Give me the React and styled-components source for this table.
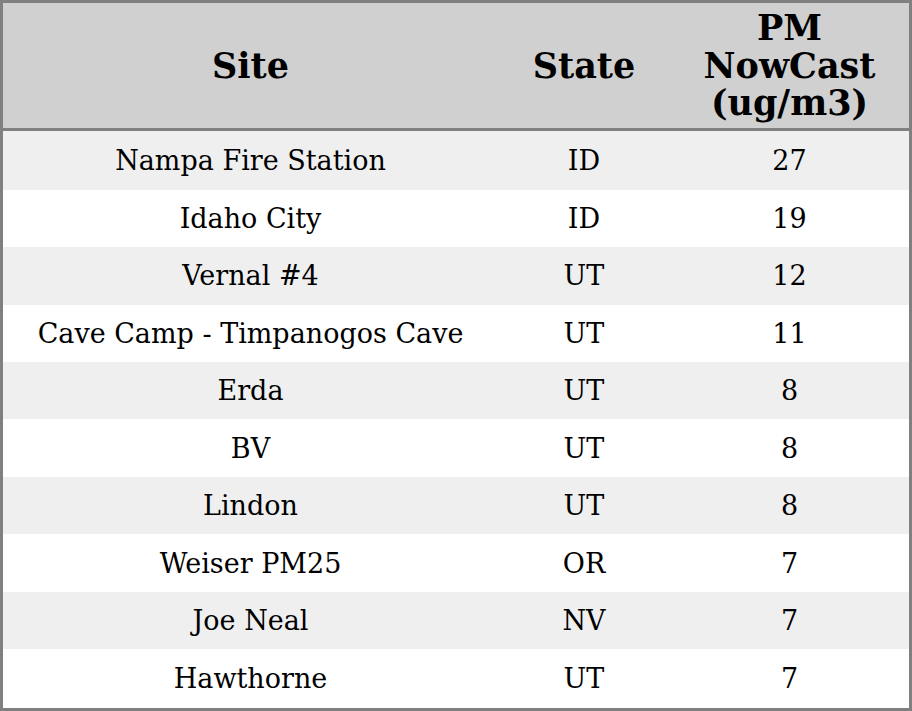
import styled, {createGlobalStyle} from 'styled-components';

const GlobalStyle = createGlobalStyle`
  html, body {
    margin: 0;
    padding: 0;
    background: #ffffff;
  }
  body {
    font-family: 'DejaVu Serif', serif;
  }
`;

const Table = styled.table`
  width: 912px;
  height: 711px;
  border-collapse: collapse;
  table-layout: fixed;
  border: 3px solid #808080;
  font-family: 'DejaVu Serif', serif;
  color: #000;
`;

const HeadRow = styled.tr`
  height: 128px;
  background: #d0d0d0;
  border-bottom: 3px solid #808080;
`;

const HeadCell = styled.th`
  font-size: 35px;
  font-weight: bold;
  line-height: 37.5px;
  text-align: center;
  padding: 0;
  width: ${(p) => p.w}px;
`;

const Row = styled.tr`
  background: ${(p) => (p.odd ? '#efefef' : '#ffffff')};
`;

const Cell = styled.td`
  font-size: 27px;
  text-align: center;
  padding: 0;
`;

const rows = [
  ['Nampa Fire Station', 'ID', 27],
  ['Idaho City', 'ID', 19],
  ['Vernal #4', 'UT', 12],
  ['Cave Camp - Timpanogos Cave', 'UT', 11],
  ['Erda', 'UT', 8],
  ['BV', 'UT', 8],
  ['Lindon', 'UT', 8],
  ['Weiser PM25', 'OR', 7],
  ['Joe Neal', 'NV', 7],
  ['Hawthorne', 'UT', 7],
];

const App = () => {
  return (
    <>
      <GlobalStyle />
      <Table>
        <thead>
          <HeadRow>
            <HeadCell w={495}>Site</HeadCell>
            <HeadCell w={172}>State</HeadCell>
            <HeadCell>
              PM
              <br />
              NowCast
              <br />
              (ug/m3)
            </HeadCell>
          </HeadRow>
        </thead>
        <tbody>
          {rows.map((r, i) => (
            <Row key={r[0]} odd={i % 2 === 0}>
              <Cell>{r[0]}</Cell>
              <Cell>{r[1]}</Cell>
              <Cell>{r[2]}</Cell>
            </Row>
          ))}
        </tbody>
      </Table>
    </>
  );
};

export default App;
